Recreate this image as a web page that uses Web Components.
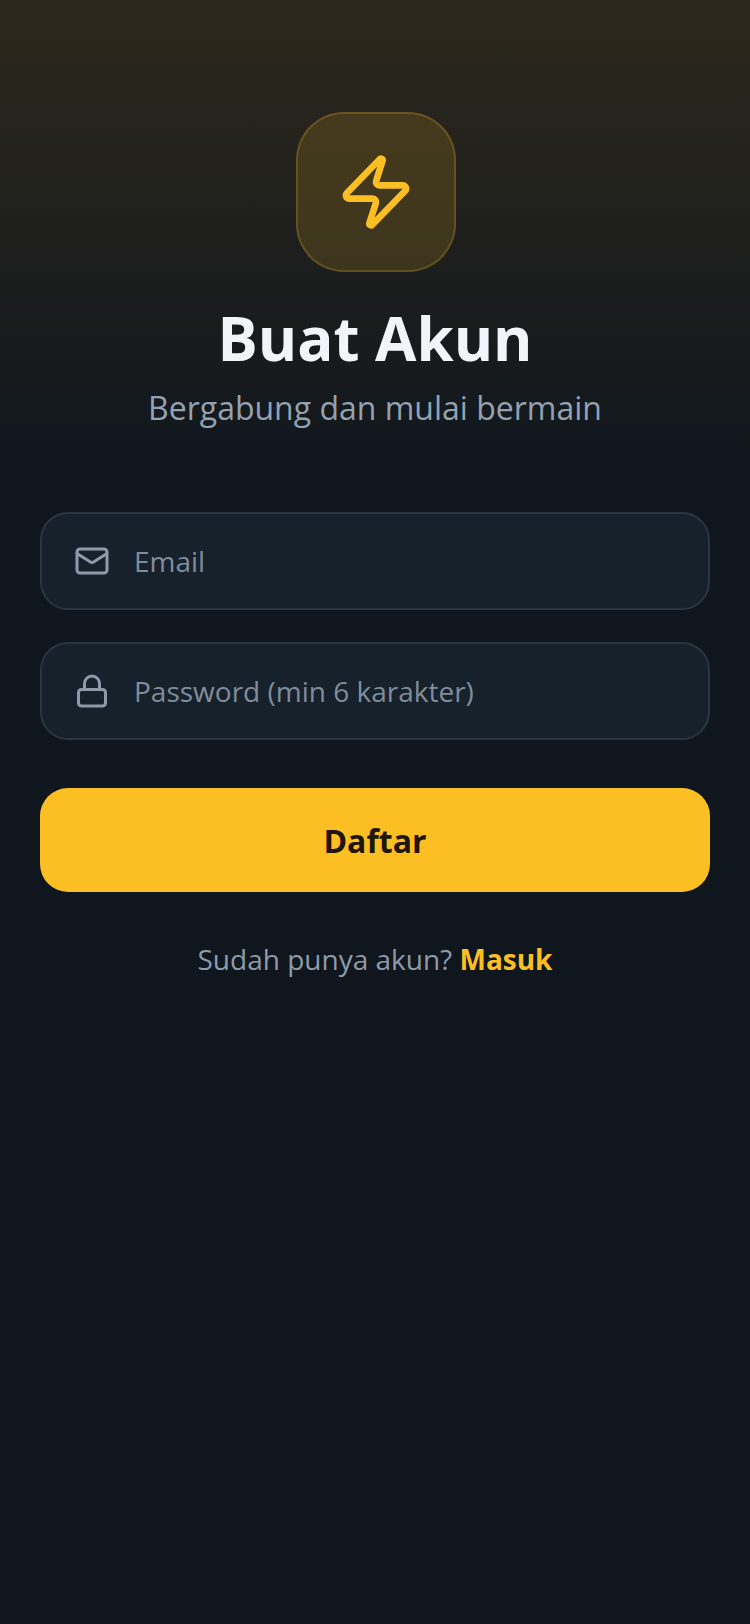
<!DOCTYPE html>
<html lang="id"><head><meta charset="utf-8"><title>Buat Akun</title>
<style>
html,body{margin:0;padding:0;background:#0f161e}
body{width:750px;min-height:1624px;font-family:"Open Sans",sans-serif}
</style></head><body>
<register-screen>
<app-badge></app-badge>
<h-title slot="head">Buat Akun</h-title>
<h-sub slot="head">Bergabung dan mulai bermain</h-sub>
<text-field icon="mail" placeholder="Email"></text-field>
<text-field icon="lock" placeholder="Password (min 6 karakter)"></text-field>
<primary-button>Daftar</primary-button>
<auth-switch prompt="Sudah punya akun?" action="Masuk"></auth-switch>
</register-screen>
<script>
function def(name,html,init){
  customElements.define(name,class extends HTMLElement{
    constructor(){super();this.attachShadow({mode:'open'}).innerHTML=html;}
    connectedCallback(){if(init)init(this);}
  });
}
def('register-screen',`<style>
:host{display:flex;flex-direction:column;align-items:stretch;box-sizing:border-box;width:750px;min-height:1624px;padding:112px 40px 0;background:linear-gradient(180deg,#2d281c 0,#0f161e 487px,#0f161e 100%)}
.head{display:flex;flex-direction:column;align-items:center;margin-bottom:82px}
</style><div class="head"><slot name="badge"></slot><slot name="head"></slot></div><slot></slot>`);
def('app-badge',`<style>
:host{display:flex;align-items:center;justify-content:center;box-sizing:border-box;width:160px;height:160px;margin-left:1px;border-radius:48px;background:rgba(251,191,36,.15);border:2px solid rgba(251,191,36,.2)}
svg{display:block;width:80px;height:80px}
</style><svg viewBox="0 0 24 24" fill="none" stroke="#fbbf24" stroke-width="2" stroke-linecap="round" stroke-linejoin="round"><path d="M4 14a1 1 0 0 1-.78-1.63l9.9-10.2a.5.5 0 0 1 .86.46l-1.92 6.02A1 1 0 0 0 13 10h7a1 1 0 0 1 .78 1.63l-9.9 10.2a.5.5 0 0 1-.86-.46l1.92-6.02A1 1 0 0 0 11 14z"/></svg>`,el=>{el.slot='badge'});
def('h-title',`<style>:host{display:block;margin-top:32px;font-size:60px;line-height:68px;font-weight:700;color:#f1f5f9;text-align:center}</style><slot></slot>`);
def('h-sub',`<style>:host{display:block;margin-top:14px;font-size:32px;line-height:44px;color:#94a1b0;text-align:center}</style><slot></slot>`);
const icons={
 mail:'<rect x="2" y="4" width="20" height="16" rx="2"/><path d="m22 7-8.97 5.7a1.94 1.94 0 0 1-2.06 0L2 7"/>',
 lock:'<rect x="3" y="11" width="18" height="11" rx="2"/><path d="M7 11V7a5 5 0 0 1 10 0v4"/>'};
def('text-field',`<style>
:host{display:flex;align-items:center;gap:24px;box-sizing:border-box;height:98px;padding:0 32px;margin-bottom:32px;border-radius:28px;background:#17212b;border:2px solid #2a3542}
svg{flex:none;display:block;width:36px;height:36px}
span{font-size:28px;line-height:38px;color:#808c9b}
</style><svg viewBox="0 0 24 24" fill="none" stroke="#8e9aa9" stroke-width="2" stroke-linecap="round" stroke-linejoin="round"></svg><span></span>`,el=>{
  el.shadowRoot.querySelector('svg').innerHTML=icons[el.getAttribute('icon')];
  el.shadowRoot.querySelector('span').textContent=el.getAttribute('placeholder');
});
def('primary-button',`<style>
:host{display:flex;align-items:center;justify-content:center;height:104px;margin-top:16px;border-radius:28px;background:#fbbf24;color:#1f1608;font-size:32px;font-weight:700}
</style><slot></slot>`);
def('auth-switch',`<style>
:host{display:block;margin-top:48px;text-align:center;font-size:28px;line-height:38px;color:#8e9aa9}
b{color:#fbbf24;font-weight:700}
</style><span></span> <b></b>`,el=>{
  el.shadowRoot.querySelector('span').textContent=el.getAttribute('prompt');
  el.shadowRoot.querySelector('b').textContent=el.getAttribute('action');
});
</script>
</body></html>
